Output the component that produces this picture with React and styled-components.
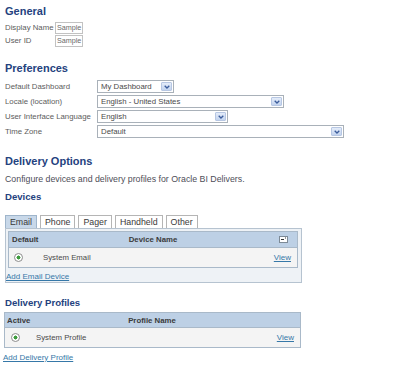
import React from "react";
import styled, { createGlobalStyle } from "styled-components";

const GlobalStyle = createGlobalStyle`
  html, body { margin: 0; padding: 0; background: #fff; }
  body { font-family: "Liberation Sans", Arial, sans-serif; color: #333; }
`;

const Page = styled.div`
  padding: 5px 0 0 5px;
  width: 395px;
`;

const Title = styled.div`
  font-size: ${(p) => (p.$small ? "9.6px" : "11px")};
  line-height: ${(p) => (p.$small ? "12px" : "13px")};
  font-weight: bold;
  color: #24427e;
  margin-top: ${(p) => p.$mt || 0}px;
`;

const FieldGrid = styled.div`
  display: grid;
  grid-template-columns: ${(p) => p.$label}px auto;
  grid-auto-rows: ${(p) => p.$row}px;
  row-gap: ${(p) => p.$gap || 0}px;
  justify-content: start;
  align-items: start;
  margin-top: ${(p) => p.$mt}px;
`;

const Label = styled.div`
  font-size: 7.8px;
  line-height: ${(p) => p.$lh || 12}px;
  color: #5c5c5c;
  white-space: nowrap;
`;

const TextBox = styled.div`
  box-sizing: border-box;
  width: 28px;
  height: 12px;
  border: 1px solid #c2c2c2;
  padding-left: 1px;
  font-size: 7.2px;
  line-height: 10px;
  color: #6a6a6a;
  overflow: hidden;
  white-space: nowrap;
`;

const SelectBox = styled.div`
  box-sizing: border-box;
  width: ${(p) => p.$w}px;
  height: 13px;
  border: 1px solid #a9b1b9;
  background: #fff;
  display: flex;
  align-items: center;
  justify-content: space-between;
  padding-left: 3px;
  font-size: 7.8px;
  color: #4a4a4a;
  white-space: nowrap;
`;

const DropButton = styled.div`
  box-sizing: border-box;
  width: 11px;
  height: 9px;
  margin-right: 1px;
  border: 1px solid #b7c7e3;
  border-radius: 1px;
  background: linear-gradient(#e4ecf9, #c3d4ef);
  display: flex;
  align-items: center;
  justify-content: center;
`;

const Select = ({ width, value }) => (
  <SelectBox $w={width}>
    <span>{value}</span>
    <DropButton>
      <svg width="6" height="4" viewBox="0 0 6 4">
        <path d="M0.7 0.7 L3 3 L5.3 0.7" fill="none" stroke="#3b5c9c" strokeWidth="1.3" />
      </svg>
    </DropButton>
  </SelectBox>
);

const Description = styled.div`
  font-size: 8.8px;
  line-height: 12px;
  margin-top: 5px;
  color: #4e4e58;
`;

const TabBar = styled.div`
  display: flex;
  gap: 3px;
  margin-top: 12px;
  height: 13px;
`;

const Tab = styled.div`
  box-sizing: border-box;
  height: 13px;
  padding: 0 4px;
  border: 1px solid ${(p) => (p.$active ? "#9fb5cb" : "#b5b5b5")};
  border-bottom: none;
  background: ${(p) => (p.$active ? "#c8d8e9" : "#fff")};
  font-size: 8.8px;
  line-height: 12px;
  color: #3a3a3a;
`;

const Panel = styled.div`
  box-sizing: border-box;
  width: 297px;
  height: 55px;
  border: 1px solid #b6c3d0;
  background: #eef2f6;
  padding: 2px 3px 0 2px;
`;

const Table = styled.div`
  box-sizing: border-box;
  width: ${(p) => p.$w || 290}px;
  margin-left: ${(p) => p.$ml || 0}px;
  margin-top: ${(p) => p.$mt || 0}px;
  border: 1px solid #a9b9c9;
  background: #f4f4f4;
`;

const HeaderRow = styled.div`
  display: grid;
  grid-template-columns: 1fr auto 1fr;
  align-items: center;
  height: ${(p) => p.$h}px;
  padding: 0 3px 0 ${(p) => p.$pl || 3}px;
  background: #bdd0e5;
  border-bottom: 1px solid #a9b9c9;
  font-size: 7.8px;
  font-weight: bold;
  color: #3a3a3a;
`;

const HeaderEnd = styled.div`
  justify-self: end;
  display: flex;
  margin-right: 6px;
`;

const DataRow = styled.div`
  display: grid;
  grid-template-columns: ${(p) => p.$first}px 1fr auto;
  align-items: center;
  height: 19px;
  padding-right: ${(p) => p.$pr}px;
  font-size: 7.8px;
  color: #4a4a4a;
`;

const Radio = styled.div`
  box-sizing: border-box;
  width: 9px;
  height: 9px;
  margin-left: ${(p) => p.$ml}px;
  border-radius: 50%;
  border: 1px solid #8e8e8e;
  background: radial-gradient(circle, #3d9b3d 0 1.8px, #fff 2.2px);
`;

const Link = styled.a`
  font-size: 8px;
  line-height: 12px;
  color: #3678a8;
  text-decoration: underline;
  cursor: pointer;
`;

const AddLink = styled(Link)`
  display: block;
  width: max-content;
  margin-left: -2px;
  margin-top: ${(p) => p.$mt}px;
`;

const ColumnIcon = () => (
  <svg width="9" height="7" viewBox="0 0 9 7">
    <rect x="0.5" y="0.5" width="8" height="6" fill="#fff" stroke="#7d8a96" />
    <rect x="2" y="3" width="3" height="1" fill="#333" />
    <rect x="6" y="1.5" width="1" height="1" fill="#333" />
  </svg>
);

export default function App() {
  return (
    <>
      <GlobalStyle />
      <Page>
        <Title>General</Title>
        <FieldGrid $label={50} $row={12} $gap={1} $mt={4}>
          <Label>Display Name</Label>
          <TextBox>Sample</TextBox>
          <Label>User ID</Label>
          <TextBox>Sample</TextBox>
        </FieldGrid>

        <Title $mt={15}>Preferences</Title>
        <FieldGrid $label={92} $row={15} $mt={5}>
          <Label $lh={13}>Default Dashboard</Label>
          <Select width={77} value="My Dashboard" />
          <Label $lh={13}>Locale (location)</Label>
          <Select width={187} value="English - United States" />
          <Label $lh={13}>User Interface Language</Label>
          <Select width={131} value="English" />
          <Label $lh={13}>Time Zone</Label>
          <Select width={247} value="Default" />
        </FieldGrid>

        <Title $mt={15}>Delivery Options</Title>
        <Description>Configure devices and delivery profiles for Oracle BI Delivers.</Description>
        <Title $small $mt={6}>Devices</Title>

        <TabBar>
          <Tab $active>Email</Tab>
          <Tab>Phone</Tab>
          <Tab>Pager</Tab>
          <Tab>Handheld</Tab>
          <Tab>Other</Tab>
        </TabBar>
        <Panel>
          <Table>
            <HeaderRow $h={15}>
              <span>Default</span>
              <span>Device Name</span>
              <HeaderEnd>
                <ColumnIcon />
              </HeaderEnd>
            </HeaderRow>
            <DataRow $first={34} $pr={6}>
              <Radio $ml={5} />
              <span>System Email</span>
              <Link>View</Link>
            </DataRow>
          </Table>
          <AddLink $mt={3}>Add Email Device</AddLink>
        </Panel>

        <Title $small $mt={14}>Delivery Profiles</Title>
        <Table $w={297} $ml={-1} $mt={3}>
          <HeaderRow $h={14} $pl={2}>
            <span>Active</span>
            <span>Profile Name</span>
            <span />
          </HeaderRow>
          <DataRow $first={31} $pr={6}>
            <Radio $ml={6} />
            <span>System Profile</span>
            <Link>View</Link>
          </DataRow>
        </Table>
        <AddLink $mt={4}>Add Delivery Profile</AddLink>
      </Page>
    </>
  );
}
